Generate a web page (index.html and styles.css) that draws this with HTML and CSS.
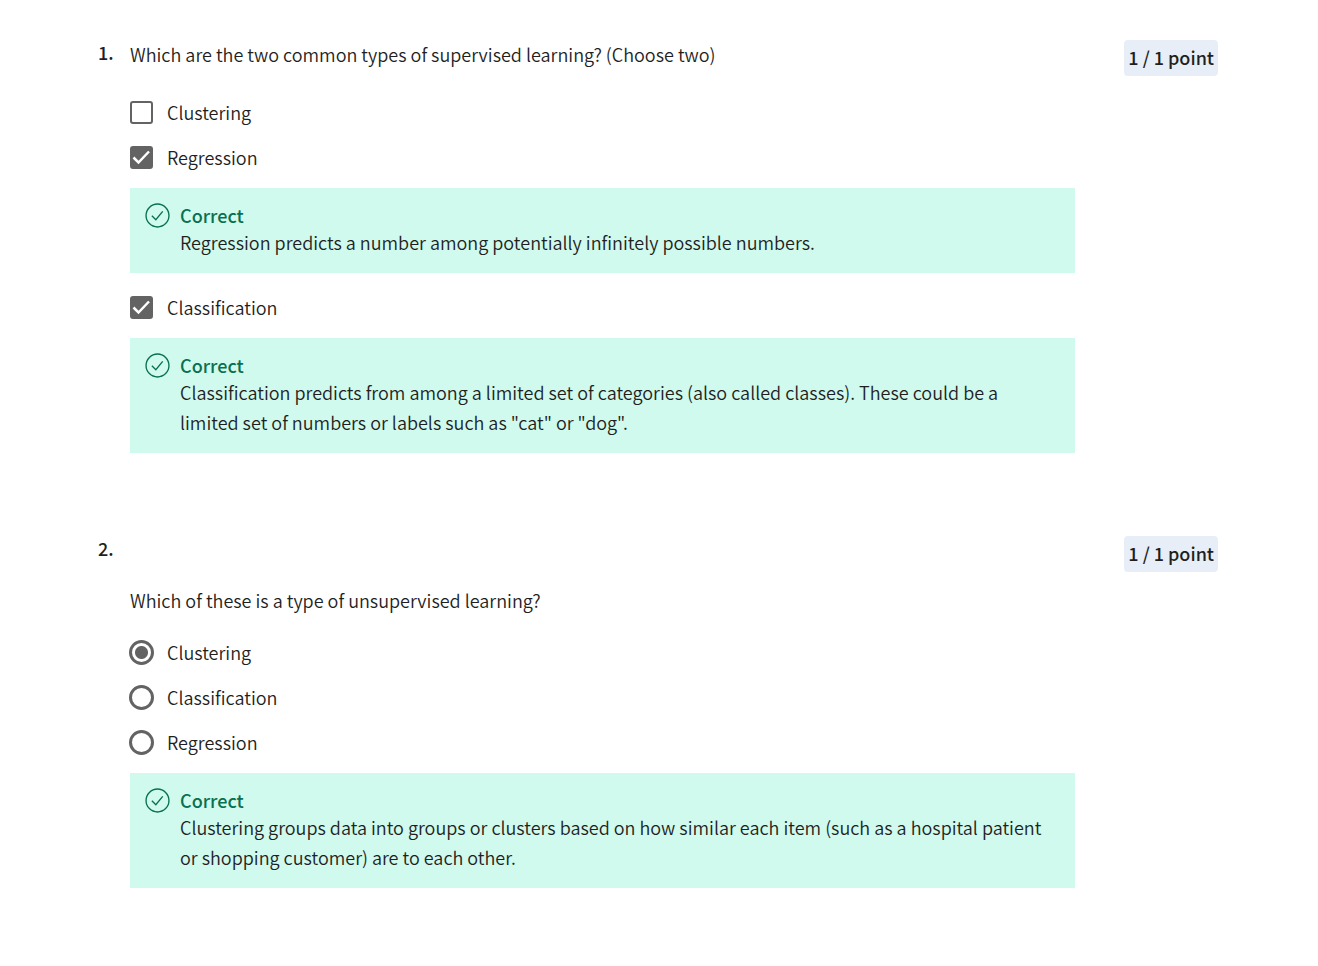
FILE: index.html
```html
<!DOCTYPE html>
<html lang="en">
<head>
<meta charset="utf-8">
<title>Quiz feedback</title>
<meta name="viewport" content="width=device-width, initial-scale=1">
<link rel="stylesheet" href="styles.css">
</head>
<body>
<main class="quiz">
  <section class="question">
    <span class="number">1.</span>
    <fieldset class="body">
      <legend class="prompt">Which are the two common types of supervised learning? (Choose two)</legend>
      <label class="option"><input class="control box" type="checkbox"><span class="choice">Clustering</span></label>
      <label class="option"><input class="control box" type="checkbox" checked><span class="choice">Regression</span></label>
      <div class="feedback">
        <svg class="tick" viewBox="0 0 24 24" aria-hidden="true"><circle cx="12" cy="12" r="11"/><path d="M6.6 12.2l3.8 3.8L17 8"/></svg>
        <div><strong class="verdict">Correct</strong><p class="text">Regression predicts a number among potentially infinitely possible numbers.</p></div>
      </div>
      <label class="option"><input class="control box" type="checkbox" checked><span class="choice">Classification</span></label>
      <div class="feedback">
        <svg class="tick" viewBox="0 0 24 24" aria-hidden="true"><circle cx="12" cy="12" r="11"/><path d="M6.6 12.2l3.8 3.8L17 8"/></svg>
        <div><strong class="verdict">Correct</strong><p class="text">Classification predicts from among a limited set of categories (also called classes). These could be a limited set of numbers or labels such as "cat" or "dog".</p></div>
      </div>
    </fieldset>
    <span class="points">1 / 1 point</span>
  </section>
  <section class="question">
    <span class="number">2.</span>
    <fieldset class="body">
      <legend class="prompt prompt-spaced">Which of these is a type of unsupervised learning?</legend>
      <label class="option"><input class="control radio" type="radio" name="q2" checked><span class="choice">Clustering</span></label>
      <label class="option"><input class="control radio" type="radio" name="q2"><span class="choice">Classification</span></label>
      <label class="option"><input class="control radio" type="radio" name="q2"><span class="choice">Regression</span></label>
      <div class="feedback">
        <svg class="tick" viewBox="0 0 24 24" aria-hidden="true"><circle cx="12" cy="12" r="11"/><path d="M6.6 12.2l3.8 3.8L17 8"/></svg>
        <div><strong class="verdict">Correct</strong><p class="text">Clustering groups data into groups or clusters based on how similar each item (such as a hospital patient or shopping customer) are to each other.</p></div>
      </div>
    </fieldset>
    <span class="points">1 / 1 point</span>
  </section>
</main>
</body>
</html>
```
FILE: styles.css
```css
* { box-sizing: border-box; }
body {
  margin: 0;
  background: #fff;
  color: #1f1f1f;
  font-family: "Noto Sans CJK SC", "Noto Sans", sans-serif;
  font-size: 18px;
  font-weight: 350;
  line-height: 30px;
}
.quiz {
  display: flex;
  flex-direction: column;
  gap: 83px;
  padding: 40px 100px 78px 98px;
}
.question {
  display: grid;
  grid-template-columns: 32px minmax(0, 1fr) auto;
  align-items: start;
}
.number { font-weight: 500; line-height: 24px; }
.body { min-width: 0; margin: 0 49px 0 0; padding: 0; border: 0; }
.prompt { padding: 0 0 22px; line-height: 28px; }
.prompt-spaced { padding: 50px 0 16px; }
.option {
  display: flex;
  align-items: center;
  gap: 14px;
  height: 45px;
}
.choice { padding-bottom: 2px; }
.control {
  appearance: none;
  flex: none;
  width: 23px;
  height: 23px;
  margin: 0;
  border: 2px solid #636363;
  border-radius: 3px;
  background: #fff;
}
.box:checked {
  background: #636363 url("data:image/svg+xml,%3Csvg xmlns='http://www.w3.org/2000/svg' viewBox='0 0 19 19'%3E%3Cpath d='M1.5 9.5l5 5L17 3.5' fill='none' stroke='white' stroke-width='2.5'/%3E%3C/svg%3E") center / 19px no-repeat;
}
.radio { width: 25px; height: 25px; margin: 0 -1px; border-width: 3px; border-radius: 50%; }
.radio:checked { background: radial-gradient(circle, #636363 6px, #fff 7px); }
.feedback {
  display: flex;
  gap: 10px;
  margin: 8px 0 12px;
  padding: 15px 16px 16px 15px;
  background: #d0faed;
}
.feedback:last-child { margin-bottom: 0; }
.tick {
  flex: none;
  width: 25px;
  height: 25px;
  fill: none;
  stroke: #087051;
  stroke-width: 1.3;
}
.verdict { display: block; color: #087051; font-weight: 500; line-height: 24px; }
.text { margin: 0; }
.points {
  padding: 3px 4px 5px;
  border-radius: 4px;
  background: #e8eef7;
  font-weight: 500;
  line-height: 28px;
}
```
